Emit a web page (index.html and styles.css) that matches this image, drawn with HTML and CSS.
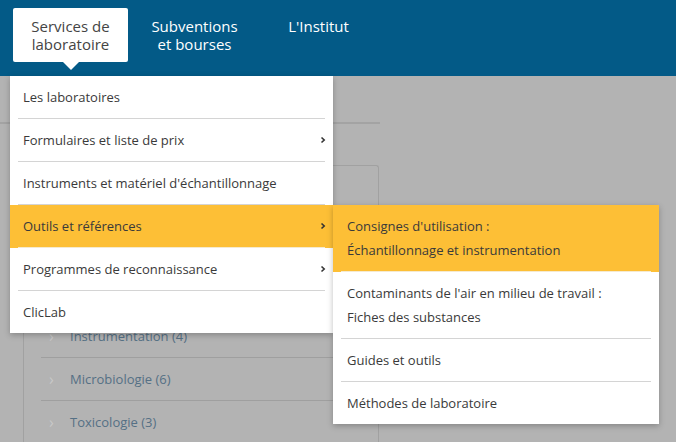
FILE: index.html
```html
<!DOCTYPE html>
<html lang="fr">
<head>
  <meta charset="UTF-8">
  <meta name="viewport" content="width=device-width, initial-scale=1.0">
  <title>Services de laboratoire</title>
  <link rel="stylesheet" href="styles.css">
</head>
<body>

  <!-- Top navigation -->
  <header class="topbar">
    <nav class="main-nav">
      <a class="nav-item active" href="#">Services de laboratoire</a>
      <a class="nav-item" href="#">Subventions et bourses</a>
      <a class="nav-item" href="#">L'Institut</a>
    </nav>
  </header>

  <main class="page">
    <!-- Page content, dimmed behind the open menu -->
    <hr class="page-rule">
    <div class="category-box">
      <ul class="category-list">
        <li><span class="cat-chevron">&rsaquo;</span>Instrumentation (4)</li>
        <li><span class="cat-chevron">&rsaquo;</span>Microbiologie (6)</li>
        <li><span class="cat-chevron">&rsaquo;</span>Toxicologie (3)</li>
      </ul>
    </div>

    <!-- Dropdown menu -->
    <ul class="dropdown">
      <li class="menu-item"><a href="#">Les laboratoires</a></li>
      <li class="menu-item has-sub"><a href="#">Formulaires et liste de prix <svg class="chev" viewBox="0 0 6 8"><polyline points="1.5,1.5 4.2,4 1.5,6.5"/></svg></a></li>
      <li class="menu-item"><a href="#">Instruments et matériel d'échantillonnage</a></li>
      <li class="menu-item has-sub open">
        <a href="#">Outils et références <svg class="chev" viewBox="0 0 6 8"><polyline points="1.5,1.5 4.2,4 1.5,6.5"/></svg></a>
        <ul class="submenu">
          <li class="menu-item hover"><a href="#">Consignes d'utilisation :<br>Échantillonnage et instrumentation</a></li>
          <li class="menu-item"><a href="#">Contaminants de l'air en milieu de travail :<br>Fiches des substances</a></li>
          <li class="menu-item"><a href="#">Guides et outils</a></li>
          <li class="menu-item"><a href="#">Méthodes de laboratoire</a></li>
        </ul>
      </li>
      <li class="menu-item has-sub"><a href="#">Programmes de reconnaissance <svg class="chev" viewBox="0 0 6 8"><polyline points="1.5,1.5 4.2,4 1.5,6.5"/></svg></a></li>
      <li class="menu-item"><a href="#">ClicLab</a></li>
    </ul>
  </main>

</body>
</html>
```

FILE: styles.css
```css
/* General Styles */
body {
  font-family: "Open Sans", "DejaVu Sans", sans-serif;
  background-color: #b3b3b3;
  margin: 0;
  height: 442px;
  overflow: hidden;
}

ul {
  list-style: none;
  margin: 0;
  padding: 0;
}

a {
  text-decoration: none;
  color: inherit;
}

/* Header */
.topbar {
  background-color: #035a87;
  height: 76px;
}

.main-nav {
  display: flex;
  gap: 9px;
  padding: 8px 0 0 13px;
}

.nav-item {
  position: relative;
  width: 115px;
  height: 54px;
  box-sizing: border-box;
  padding: 9px 10px 0;
  text-align: center;
  font-size: 15px;
  line-height: 18px;
  color: #fff;
  border-radius: 2px;
}

.nav-item.active {
  background-color: #fff;
  color: #444;
}

.nav-item.active::after {
  content: "";
  position: absolute;
  left: 50%;
  bottom: -8px;
  margin-left: -8px;
  border-left: 8px solid transparent;
  border-right: 8px solid transparent;
  border-top: 8px solid #fff;
}

/* Page content behind the overlay */
.page {
  position: relative;
  padding-top: 46px;
}

.page-rule {
  width: 380px;
  margin: 0;
  border: 0;
  border-top: 2px solid #a3a3a3;
}

.category-box {
  width: 354px;
  margin: 41px 0 0 23px;
  height: 276px;
  border: 1px solid #a1a1a1;
  border-bottom: 0;
  border-radius: 3px 3px 0 0;
}

.category-list {
  padding: 149px 0 0 17px;
}

.category-list li {
  display: flex;
  align-items: center;
  height: 42px;
  border-bottom: 1px solid #9f9f9f;
  font-size: 13px;
  color: #557085;
}

.category-list li:last-child {
  border-bottom: 0;
}

.cat-chevron {
  width: 29px;
  padding-left: 8px;
  box-sizing: border-box;
  color: #c8c8c8;
  font-size: 16px;
}

/* Dropdown menu */
.dropdown {
  position: absolute;
  top: 0;
  left: 10px;
  width: 323px;
  background-color: #fff;
  box-shadow: 0 2px 6px rgba(0, 0, 0, 0.25);
}

.menu-item {
  padding: 0 8px;
}

.menu-item a {
  display: flex;
  align-items: center;
  justify-content: space-between;
  padding: 9px 5px;
  font-size: 13px;
  line-height: 24px;
  color: #3a3a3a;
  border-bottom: 1px solid #d4d4d4;
}

.menu-item:last-child a {
  border-bottom: 0;
}

.menu-item.open,
.menu-item.hover {
  background-color: #fdbf36;
}

.menu-item.open > a,
.menu-item.hover > a {
  border-bottom-color: #f5ead0;
}

.chev {
  width: 6px;
  height: 8px;
  margin-right: -6px;
  fill: none;
  stroke: #333;
  stroke-width: 1.6;
}

.open {
  position: relative;
}

.submenu {
  position: absolute;
  top: 0;
  left: 100%;
  width: 326px;
  background-color: #fff;
  box-shadow: 0 2px 6px rgba(0, 0, 0, 0.25);
}

.submenu .menu-item a {
  display: block;
  padding-left: 6px;
}
```
